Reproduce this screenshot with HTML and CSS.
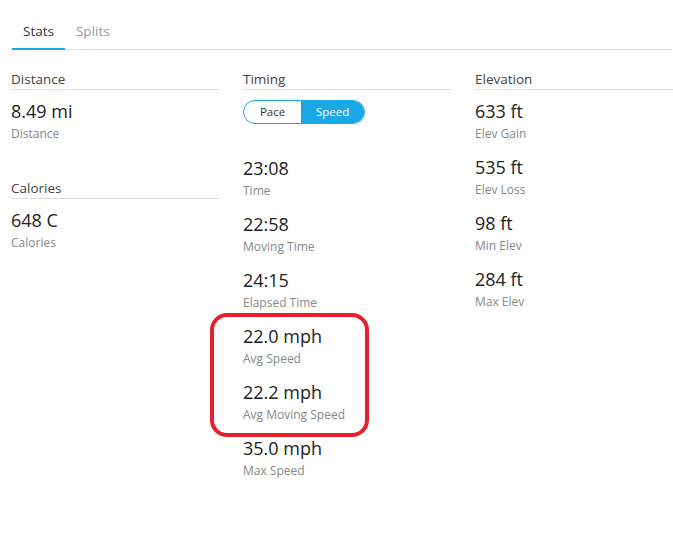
FILE: index.html
```html
<!DOCTYPE html>
<html lang="en">
<head>
    <meta charset="UTF-8">
    <title>Stats</title>
    <link rel="stylesheet" href="styles.css">
</head>
<body>
    <div class="tabs">
        <div class="tab active">Stats</div>
        <div class="tab">Splits</div>
    </div>

    <div class="columns">
        <div class="col">
            <div class="section">
                <div class="section-title">Distance</div>
                <div class="stat"><div class="value">8.49 mi</div><div class="label">Distance</div></div>
            </div>
            <div class="section">
                <div class="section-title">Calories</div>
                <div class="stat"><div class="value">648 C</div><div class="label">Calories</div></div>
            </div>
        </div>

        <div class="col timing">
            <div class="section">
                <div class="section-title">Timing</div>
                <div class="toggle">
                    <span class="seg">Pace</span>
                    <span class="seg on">Speed</span>
                </div>
                <div class="stat"><div class="value">23:08</div><div class="label">Time</div></div>
                <div class="stat"><div class="value">22:58</div><div class="label">Moving Time</div></div>
                <div class="stat"><div class="value">24:15</div><div class="label">Elapsed Time</div></div>
                <div class="stat"><div class="value">22.0 mph</div><div class="label">Avg Speed</div></div>
                <div class="stat"><div class="value">22.2 mph</div><div class="label">Avg Moving Speed</div></div>
                <div class="stat"><div class="value">35.0 mph</div><div class="label">Max Speed</div></div>
            </div>
            <div class="highlight"></div>
        </div>

        <div class="col">
            <div class="section">
                <div class="section-title">Elevation</div>
                <div class="stat"><div class="value">633 ft</div><div class="label">Elev Gain</div></div>
                <div class="stat"><div class="value">535 ft</div><div class="label">Elev Loss</div></div>
                <div class="stat"><div class="value">98 ft</div><div class="label">Min Elev</div></div>
                <div class="stat"><div class="value">284 ft</div><div class="label">Max Elev</div></div>
            </div>
        </div>
    </div>
</body>
</html>
```

FILE: styles.css
```css
body {
    margin: 0;
    background: #fff;
    color: #333;
    font-family: "Open Sans", "Liberation Sans", sans-serif;
}
.tabs {
    display: flex;
    margin: 16px 1px 0 12px;
    border-bottom: 1px solid #dedede;
}
.tab {
    padding: 5px 11px 7px;
    font-size: 13.5px;
    line-height: 20px;
    color: #999;
    margin-bottom: -1px;
    border-bottom: 2px solid transparent;
}
.tab.active {
    color: #333;
    border-bottom-color: #1aa7e6;
}
.columns {
    display: flex;
    gap: 23px;
    padding: 19px 0 0 11px;
}
.col {
    width: 209px;
    flex: none;
}
.col:last-child {
    width: 198px;
}
.timing {
    position: relative;
}
.section {
    margin-bottom: 34px;
}
.section-title {
    font-size: 13.5px;
    line-height: 20px;
    color: #444;
    border-bottom: 1px solid #dedede;
    margin-bottom: 10px;
}
.stat {
    margin-bottom: 12px;
}
.value {
    font-size: 18px;
    line-height: 23px;
    color: #222;
}
.label {
    font-size: 12px;
    line-height: 21px;
    color: #888;
}
.toggle {
    display: flex;
    width: 120px;
    height: 22px;
    border: 1px solid #1aa7e6;
    border-radius: 12px;
    overflow: hidden;
    margin-bottom: 33px;
    font-size: 11.5px;
}
.seg {
    flex: 1;
    text-align: center;
    line-height: 22px;
    color: #333;
}
.seg.on {
    flex: 1.1;
    background: #1aa7e6;
    color: #fff;
}
.highlight {
    position: absolute;
    left: -33px;
    top: 244px;
    width: 151px;
    height: 116px;
    border: 4px solid #e8202a;
    border-radius: 17px;
}
```
